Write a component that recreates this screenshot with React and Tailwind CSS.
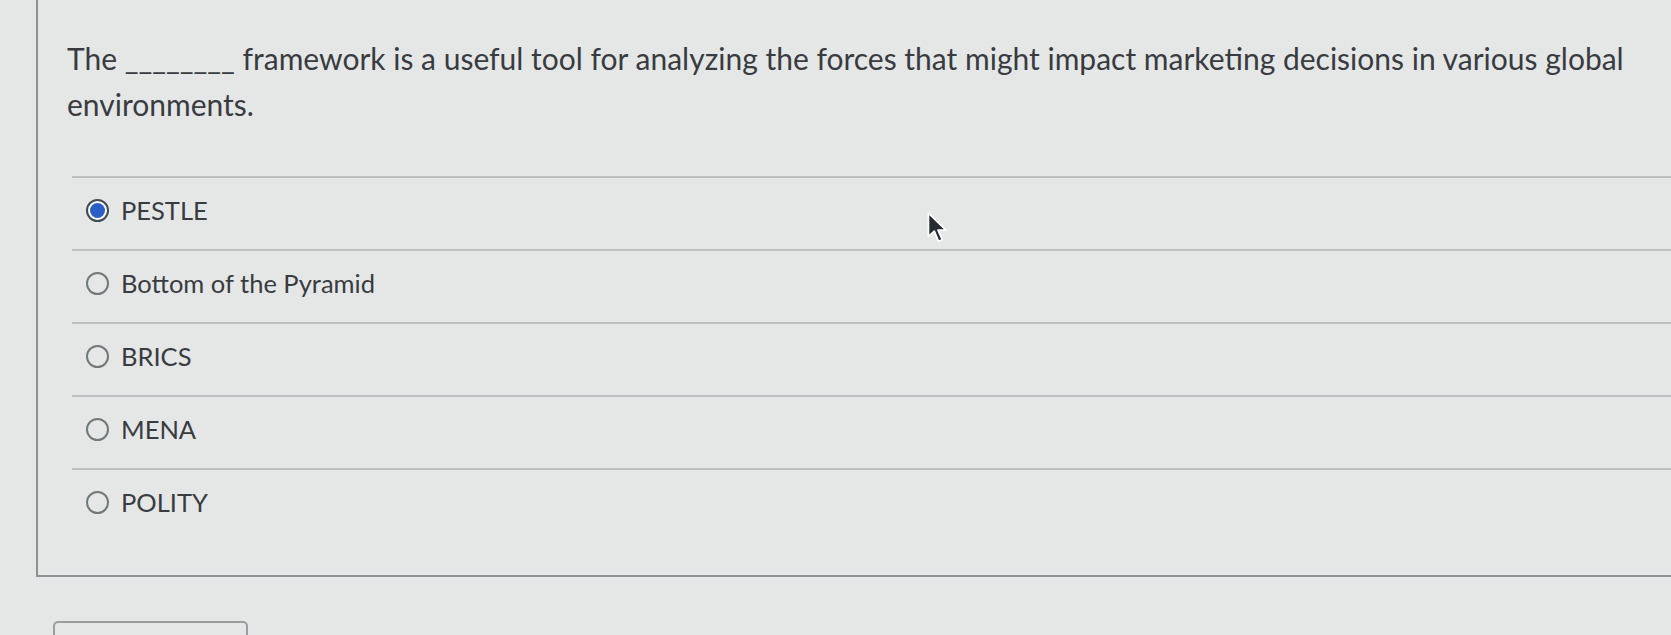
import React from 'react';

const options = ['PESTLE', 'Bottom of the Pyramid', 'BRICS', 'MENA', 'POLITY'];

function Radio({ checked }) {
  if (checked) {
    return (
      <span className="flex h-[23px] w-[23px] shrink-0 items-center justify-center rounded-full border-2 border-[#3f4a57] bg-white">
        <span className="h-[15px] w-[15px] rounded-full bg-[#2a5fc8]" />
      </span>
    );
  }
  return <span className="h-[23px] w-[23px] shrink-0 rounded-full border-2 border-[#72777b]" />;
}

function Cursor() {
  return (
    <svg className="absolute left-[926px] top-[211px]" width="24" height="34" viewBox="0 0 22 32">
      <path
        d="M2 2 L2 24 L7.5 19 L11.5 28.5 L15 27 L11 18 L18.5 18 Z"
        fill="#262b33"
        stroke="#ffffff"
        strokeWidth="1.6"
        strokeLinejoin="round"
      />
    </svg>
  );
}

export default function App() {
  return (
    <div className="relative h-[635px] w-full overflow-hidden bg-[#e5e7e7] font-['Lato',sans-serif] text-[#383b3f]">
      <div className="ml-[36px] border-b-2 border-l-2 border-[#8e9294] pb-[34px]">
        <p className="pl-[29px] pt-[35px] text-[30px] leading-[46px]">
          The ________ framework is a useful tool for analyzing the forces that might impact marketing decisions in various global environments.
        </p>
        <div className="ml-[34px] mt-[49px]">
          {options.map((opt, i) => (
            <div key={opt} className="flex h-[73px] items-center gap-[12px] border-t-2 border-[#bcc0c1] pb-[6px] pl-[14px]">
              <Radio checked={i === 0} />
              <span className="text-[25.5px]">{opt}</span>
            </div>
          ))}
        </div>
      </div>
      <div className="ml-[53px] mt-[44px] h-[40px] w-[195px] rounded-[5px] border-2 border-[#9a9ea0]" />
      <Cursor />
    </div>
  );
}
